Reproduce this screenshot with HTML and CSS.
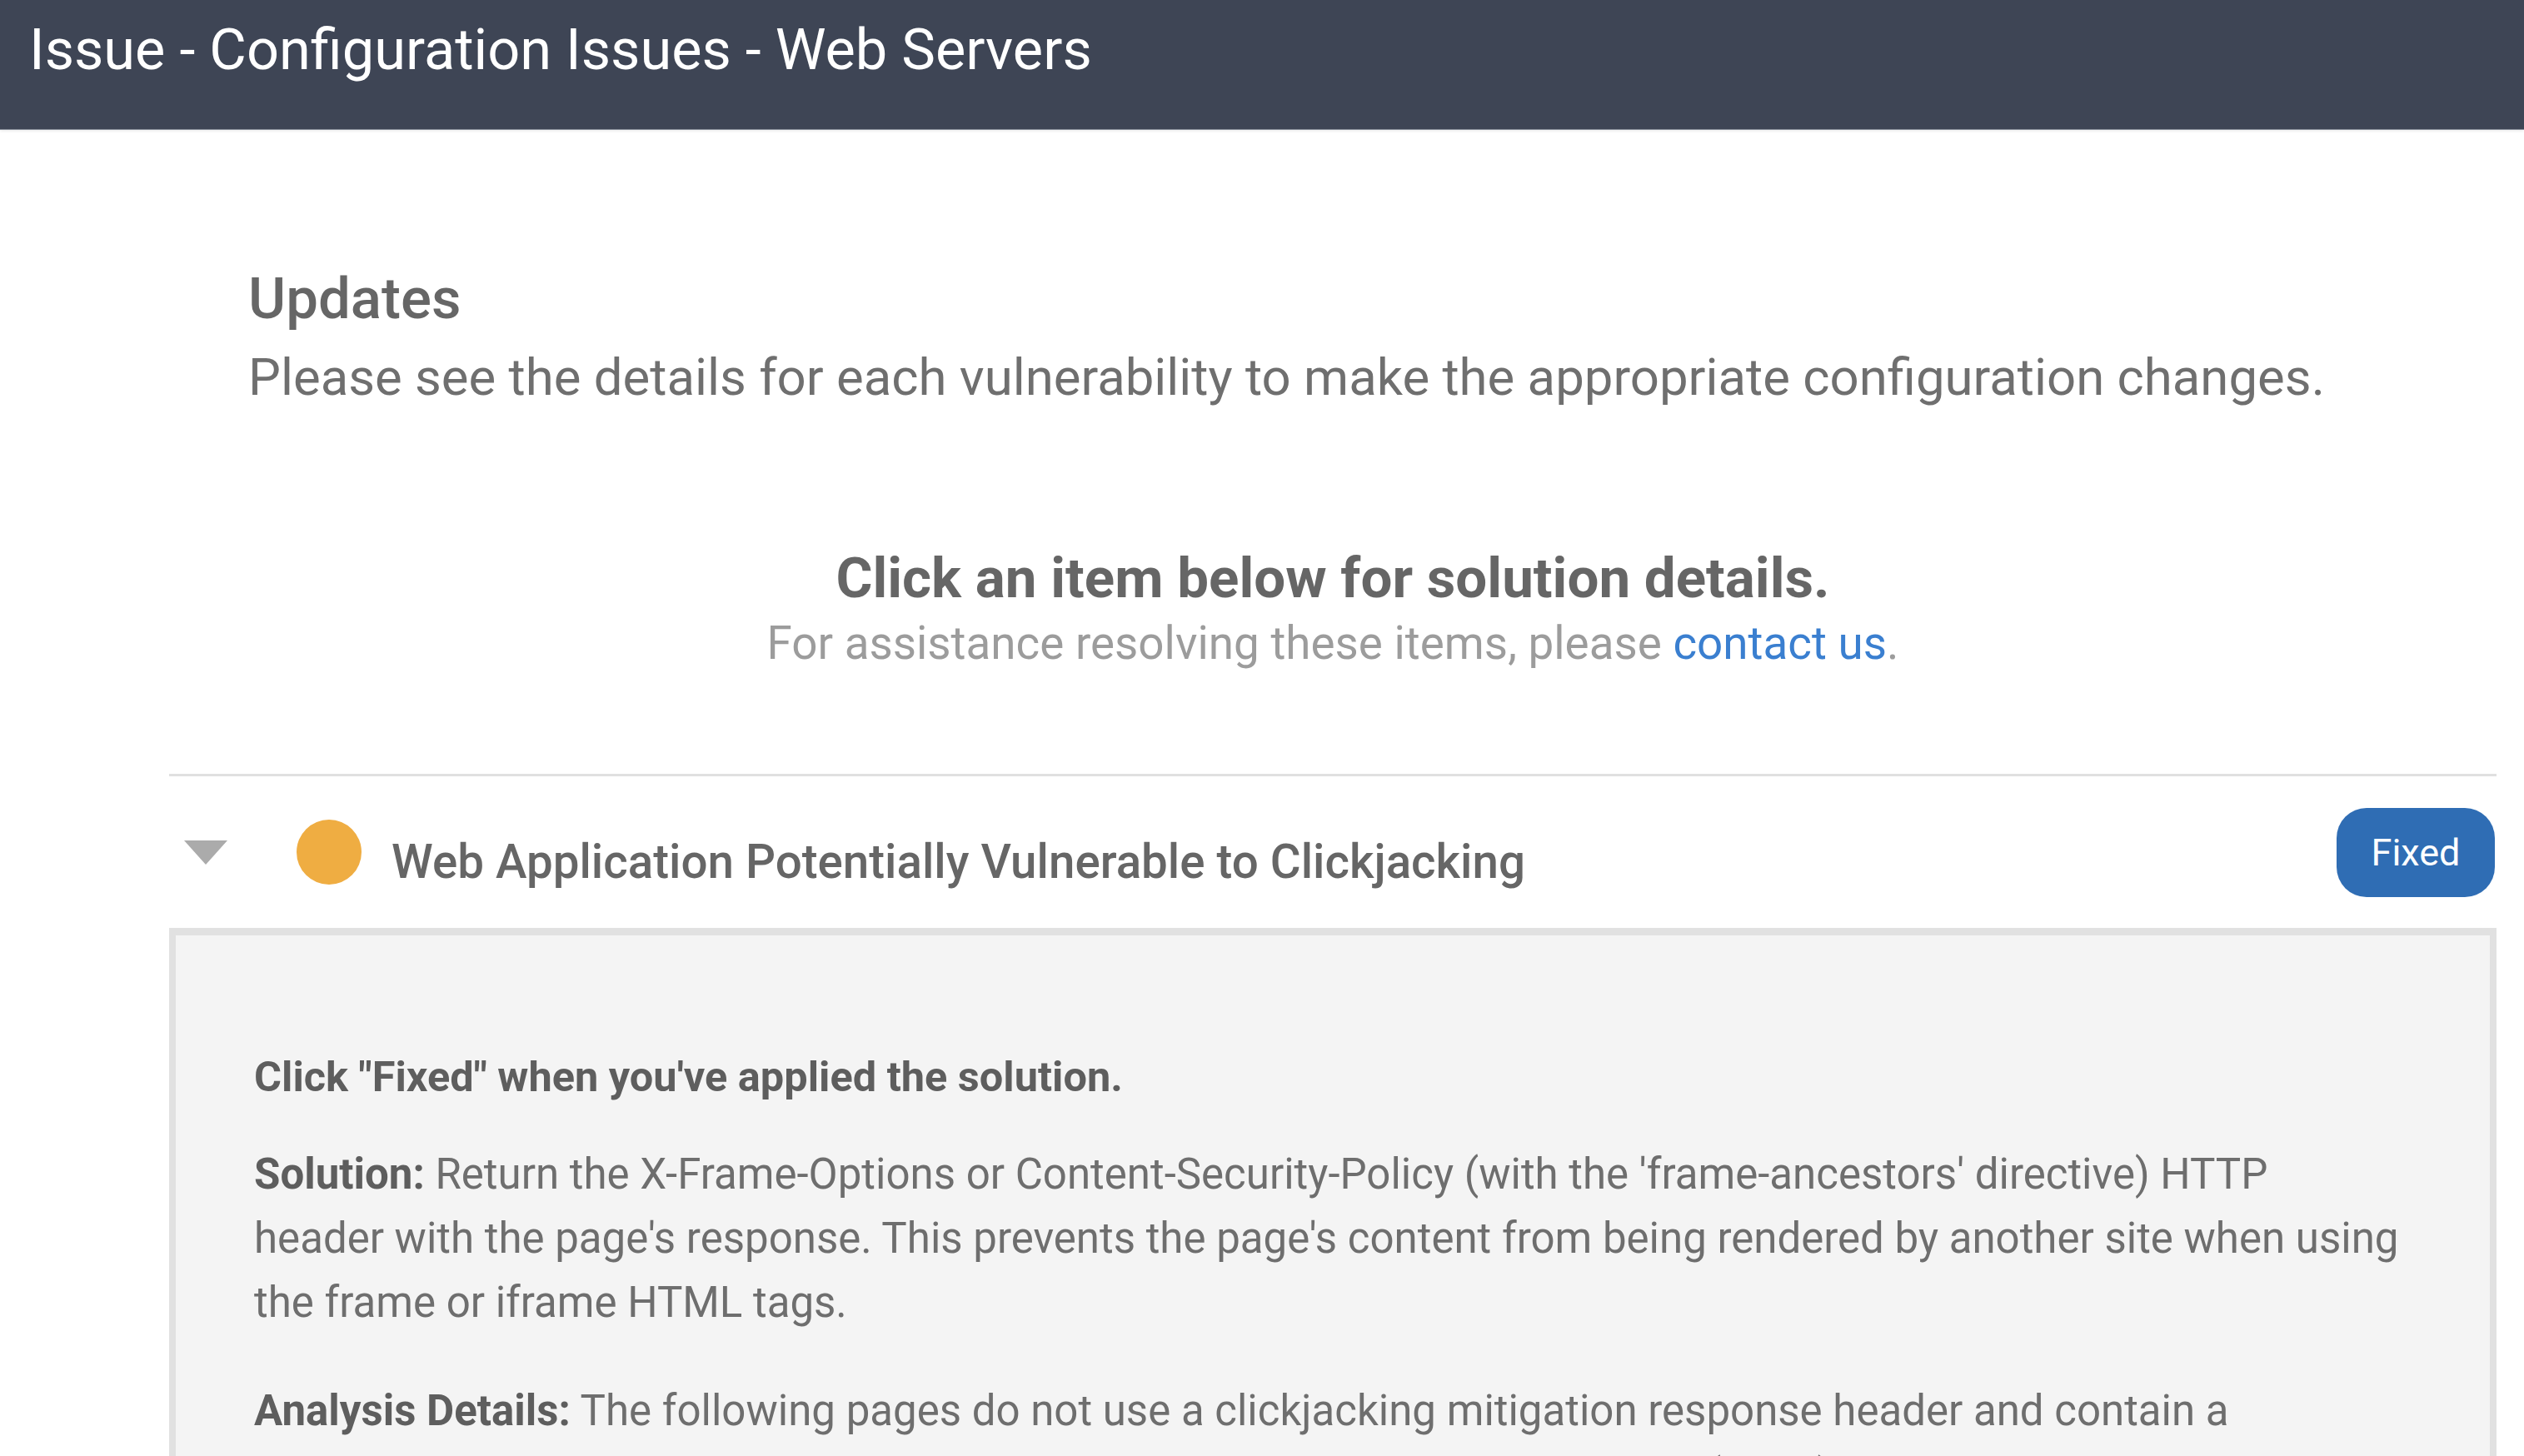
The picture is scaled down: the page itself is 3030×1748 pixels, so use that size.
FILE: index.html
```
<!DOCTYPE html>
<html lang="en">
<head>
<meta charset="utf-8">
<title>Issue - Configuration Issues - Web Servers</title>
<link rel="stylesheet" href="styles.css">
</head>
<body>
<header class="topbar">
  <h1 class="topbar-title">Issue - Configuration Issues - Web Servers</h1>
</header>
<main class="main">
  <section class="updates">
    <h2 class="updates-title">Updates</h2>
    <p class="updates-text">Please see the details for each vulnerability to make the appropriate configuration changes.</p>
  </section>
  <section class="prompt">
    <h3 class="prompt-title">Click an item below for solution details.</h3>
    <p class="prompt-text">For assistance resolving these items, please <a class="link" href="#">contact us</a>.</p>
  </section>
  <div class="issues">
    <div class="issue">
      <div class="issue-head">
        <span class="caret"></span>
        <span class="dot"></span>
        <span class="issue-title">Web Application Potentially Vulnerable to Clickjacking</span>
        <button class="btn-fixed" type="button">Fixed</button>
      </div>
      <div class="issue-body">
        <p class="note">Click "Fixed" when you've applied the solution.</p>
        <p class="para"><strong class="label">Solution:</strong> Return the X-Frame-Options or Content-Security-Policy (with the 'frame-ancestors' directive) HTTP<br>header with the page's response. This prevents the page's content from being rendered by another site when using the frame or iframe HTML tags.</p>
        <p class="para analysis"><strong class="label">Analysis Details:</strong> The following pages do not use a clickjacking mitigation response header and contain a<br>clickable element such as a login form or button: https://www.example.com/ (2021)</p>
      </div>
    </div>
  </div>
</main>
</body>
</html>
```
FILE: styles.css
```
html, body {
  margin: 0;
  padding: 0;
  background: #ffffff;
}

body {
  font-family: Roboto, "Liberation Sans", sans-serif;
  color: #6e6e6e;
  overflow: hidden;
}

.topbar {
  box-sizing: border-box;
  height: 155px;
  padding: 20px 35px 0;
  background: #3e4555;
  box-shadow: 0 1px 0 #8a909b, 0 3px 3px rgba(0, 0, 0, 0.06);
}

.topbar-title {
  margin: 0;
  font-size: 68.5px;
  line-height: 80px;
  font-weight: 400;
  color: #ffffff;
}

.main {
  margin: 0 33px 0 203px;
}

.updates {
  padding: 162px 95px 0;
}

.updates-title {
  margin: 0;
  font-size: 69px;
  line-height: 84px;
  font-weight: 500;
  color: #666666;
}

.updates-text {
  margin: 17px 0 0;
  font-size: 61.7px;
  line-height: 70px;
  color: #6f6f6f;
}

.prompt {
  margin-top: 169px;
  text-align: center;
}

.prompt-title {
  margin: 0;
  font-size: 67.3px;
  line-height: 74px;
  font-weight: 700;
  color: #666666;
}

.prompt-text {
  margin: 9px 0 0;
  font-size: 54.8px;
  line-height: 64px;
  color: #9c9c9c;
}

.link {
  color: #3a7fd0;
  text-decoration: none;
}

.issues {
  margin-top: 125px;
  border-top: 3px solid #e0e0e0;
}

.issue-head {
  display: flex;
  align-items: center;
  height: 182px;
  padding-left: 18px;
  padding-right: 2px;
}

.caret {
  width: 0;
  height: 0;
  border-left: 26px solid transparent;
  border-right: 26px solid transparent;
  border-top: 29px solid #ababab;
}

.dot {
  width: 78px;
  height: 78px;
  margin-left: 83px;
  border-radius: 50%;
  background: #efad42;
}

.issue-title {
  margin-left: 36px;
  padding-top: 24px;
  font-size: 56.5px;
  line-height: 59px;
  font-weight: 500;
  color: #666666;
}

.btn-fixed {
  margin-left: auto;
  width: 190px;
  height: 107px;
  border: 0;
  border-radius: 36px;
  background: #2f6db4;
  color: #ffffff;
  font-family: Roboto, "Liberation Sans", sans-serif;
  font-size: 45px;
  padding: 0;
}

.issue-body {
  border-style: solid;
  border-color: #e1e1e1;
  border-width: 9px 8px 0;
  background: #f4f4f4;
  padding: 131px 70px 200px 94px;
  font-size: 51px;
  line-height: 77px;
  color: #6e6e6e;
}

.note {
  margin: 0;
  font-size: 50.5px;
  font-weight: 700;
  color: #5e5e5e;
}

.para {
  margin: 40px 0 0;
}

.para.analysis {
  margin-top: 53px;
}

.label {
  font-weight: 700;
  color: #5e5e5e;
}
```
